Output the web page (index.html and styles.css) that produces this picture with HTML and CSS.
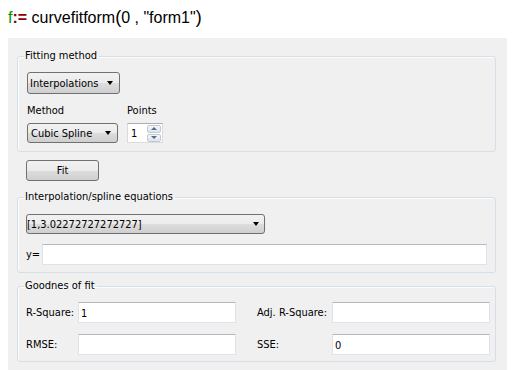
FILE: index.html
```html
<!DOCTYPE html>
<html>
<head>
<meta charset="utf-8">
<link rel="stylesheet" href="styles.css">
</head>
<body>
<div class="title"><span class="fn">f</span><span class="assign">:=</span> curvefitform<span class="paren">(</span>0 , "form1"<span class="paren">)</span></div>
<div class="panel">
  <fieldset class="group g1">
    <legend>Fitting method</legend>
    <div class="combo c-interp"><span>Interpolations</span><span class="arrow"></span></div>
    <div class="method-row">
      <div class="col col-method">
        <div class="lbl">Method</div>
        <div class="combo c-method"><span>Cubic Spline</span><span class="arrow"></span></div>
      </div>
      <div class="col">
        <div class="lbl">Points</div>
        <div class="spin"><span class="spin-val">1</span><div class="spin-btns"><span class="sb up"><i></i></span><span class="sb down"><i></i></span></div></div>
      </div>
    </div>
  </fieldset>
  <div class="btn">Fit</div>
  <fieldset class="group g2">
    <legend>Interpolation/spline equations</legend>
    <div class="combo c-eq"><span>[1,3.02272727272727]</span><span class="arrow"></span></div>
    <div class="y-row"><span class="ylbl">y=</span><div class="field grow"></div></div>
  </fieldset>
  <fieldset class="group g3">
    <legend>Goodnes of fit</legend>
    <div class="fit-grid">
      <span class="glbl">R-Square:</span><div class="field">1</div>
      <span class="glbl right">Adj. R-Square:</span><div class="field"></div>
      <span class="glbl">RMSE:</span><div class="field"></div>
      <span class="glbl right">SSE:</span><div class="field">0</div>
    </div>
  </fieldset>
</div>
</body>
</html>
```
FILE: styles.css
```css
html, body {
  margin: 0;
  padding: 0;
  background: #ffffff;
}
body {
  width: 518px;
  height: 370px;
  overflow: hidden;
  font-family: "DejaVu Sans Condensed", "DejaVu Sans", "Liberation Sans", sans-serif;
  font-size: 11px;
  color: #000;
}
.title {
  box-sizing: border-box;
  height: 38px;
  padding: 8px 0 0 8px;
  font-family: "Liberation Sans", Arial, sans-serif;
  font-size: 16px;
  line-height: 19px;
  white-space: pre;
  color: #000;
}
.title .fn { color: #009000; }
.title .assign { color: #8b0000; font-weight: bold; }
.title .paren { font-size: 18px; }

.panel {
  box-sizing: border-box;
  margin-left: 8px;
  width: 499px;
  height: 332px;
  background: #f0f0f0;
  padding: 12px 11px 8px 9px;
  display: flex;
  flex-direction: column;
}
.group {
  margin: 0;
  min-width: 0;
  border: 1px solid #d5dfe5;
  border-radius: 3px;
  box-shadow: inset 1px 1px 0 #fbfcfd;
}
.group legend {
  line-height: 12px;
  padding: 0 2px 0 1px;
  margin-left: -2px;
}
.g1 { padding: 10px 9px 8px 9px; }
.g1 legend { margin-left: -3px; }
.g2 { margin-top: 10px; padding: 11px 8px 7px 8px; }
.g3 { margin-top: 7px; padding: 10px 5px 6px 8px; }

.combo {
  box-sizing: border-box;
  display: flex;
  align-items: center;
  justify-content: space-between;
  border: 1px solid #707070;
  border-radius: 3px;
  background: linear-gradient(#f2f2f2 0%, #ebebeb 50%, #dddddd 51%, #cfcfcf 100%);
  line-height: 13px;
}
.arrow {
  width: 0;
  height: 0;
  border-left: 3.5px solid transparent;
  border-right: 3.5px solid transparent;
  border-top: 4px solid #000;
}
.c-interp { width: 93px; height: 22px; padding: 0 6px 0 2px; }
.c-method { width: 91px; height: 20px; padding: 0 6px 0 3px; }
.c-eq { width: 239px; height: 20px; padding: 0 5px 0 0; }

.method-row {
  display: flex;
  margin-top: 10px;
}
.col { display: flex; flex-direction: column; }
.col-method { width: 100px; }
.lbl { line-height: 13px; height: 13px; margin-bottom: 6px; }

.spin {
  box-sizing: border-box;
  width: 36px;
  height: 20px;
  background: #fff;
  border: 1px solid #d8dbe0;
  border-top-color: #abadb3;
  display: flex;
  align-items: center;
  justify-content: space-between;
  padding: 0 1px 0 3px;
}
.spin-btns {
  display: flex;
  flex-direction: column;
  gap: 1px;
}
.sb {
  box-sizing: border-box;
  width: 14px;
  height: 8px;
  border: 1px solid #c3c9d3;
  border-radius: 2px;
  background: linear-gradient(#f4f6f9, #dfe4ea);
  display: flex;
  align-items: center;
  justify-content: center;
}
.sb i {
  width: 0;
  height: 0;
  border-left: 3px solid transparent;
  border-right: 3px solid transparent;
}
.up i { border-bottom: 3px solid #4c6c9c; }
.down i { border-top: 3px solid #4c6c9c; }

.btn {
  box-sizing: border-box;
  margin: 8px 0 0 9px;
  width: 73px;
  height: 21px;
  border: 1px solid #707070;
  border-radius: 3px;
  background: linear-gradient(#f2f2f2 0%, #ebebeb 50%, #dddddd 51%, #cfcfcf 100%);
  display: flex;
  align-items: center;
  justify-content: center;
  line-height: 13px;
}

.y-row {
  display: flex;
  align-items: center;
  margin-top: 10px;
}
.ylbl { width: 16px; }
.field {
  box-sizing: border-box;
  height: 21px;
  background: #fff;
  border: 1px solid #dfe2e8;
  border-top-color: #b5b8c0;
  display: flex;
  align-items: center;
  padding: 1px 2px 0 2px;
}
.grow { flex: 1; }

.fit-grid {
  display: grid;
  grid-template-columns: 52px 158px 96px 158px;
  grid-auto-rows: 21px;
  row-gap: 11px;
  align-items: center;
}
.glbl.right { padding-left: 21px; }
```
